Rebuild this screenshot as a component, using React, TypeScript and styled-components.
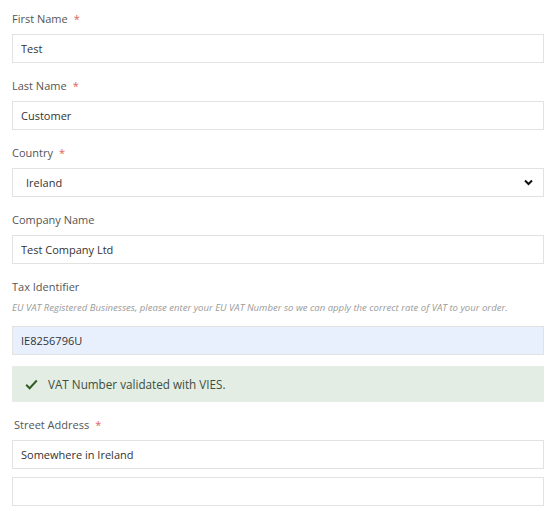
import React from "react";
import styled, { createGlobalStyle } from "styled-components";

const Global = createGlobalStyle`
  html, body { margin: 0; padding: 0; background: #fff; }
  body { font-family: "Open Sans", "Noto Sans", sans-serif; color: #333; }
  * { box-sizing: border-box; }
`;

const Form = styled.form`
  width: 555px;
  padding: 10px 11px 0 12px;
  display: flex;
  flex-direction: column;
`;

const Field = styled.div<{ $gap?: number }>`
  display: flex;
  flex-direction: column;
  margin-bottom: ${(p) => (p.$gap ?? 14)}px;
`;

const Label = styled.label<{ $indent?: number }>`
  font-size: 11px;
  line-height: 18px;
  color: #555;
  margin-bottom: 6px;
  padding-left: ${(p) => p.$indent ?? 0}px;
`;

const Req = styled.span`
  color: #e0605a;
  margin-left: 6px;
  font-size: 11px;
`;

const Help = styled.div`
  font-size: 9.55px;
  font-style: italic;
  line-height: 12px;
  color: #9a9a9a;
  margin-bottom: 12px;
  white-space: nowrap;
`;

const Input = styled.input<{ $filled?: boolean }>`
  height: 29px;
  width: 100%;
  border: 1px solid #e2e2e2;
  background: ${(p) => (p.$filled ? "#e8f0fe" : "#fff")};
  padding: 0 8px;
  font-family: inherit;
  font-size: 11px;
  color: #333;
  outline: none;
  display: block;
`;

const Stack = styled.div`
  display: flex;
  flex-direction: column;
  gap: 8px;
`;

const SelectWrap = styled.div`
  position: relative;
`;

const Select = styled.select`
  appearance: none;
  -webkit-appearance: none;
  height: 29px;
  width: 100%;
  border: 1px solid #e2e2e2;
  background: #fff;
  padding: 0 13px;
  font-family: inherit;
  font-size: 11px;
  color: #333;
  outline: none;
  display: block;
`;

const Chevron = styled.svg`
  position: absolute;
  right: 11px;
  top: 11px;
  width: 9px;
  height: 7px;
  pointer-events: none;
`;

const Notice = styled.div`
  height: 36px;
  background: #e3ede4;
  display: flex;
  align-items: center;
  gap: 10px;
  padding-left: 13px;
  font-size: 11.7px;
  color: #3d4f3d;
  margin-bottom: 14px;
`;

const Check = styled.svg`
  width: 13px;
  height: 11px;
`;

export default function App() {
  return (
    <>
      <Global />
      <Form>
        <Field>
          <Label>
            First Name<Req>*</Req>
          </Label>
          <Input defaultValue="Test" />
        </Field>
        <Field>
          <Label>
            Last Name<Req>*</Req>
          </Label>
          <Input defaultValue="Customer" />
        </Field>
        <Field>
          <Label>
            Country<Req>*</Req>
          </Label>
          <SelectWrap>
            <Select defaultValue="IE">
              <option value="IE">Ireland</option>
            </Select>
            <Chevron viewBox="0 0 9 7">
              <path d="M1 1.5 L4.5 5 L8 1.5" fill="none" stroke="#111" strokeWidth="2" />
            </Chevron>
          </SelectWrap>
        </Field>
        <Field>
          <Label>Company Name</Label>
          <Input defaultValue="Test Company Ltd" />
        </Field>
        <Field $gap={11}>
          <Label>Tax Identifier</Label>
          <Help>
            EU VAT Registered Businesses, please enter your EU VAT Number so we can apply the correct rate of VAT to your order.
          </Help>
          <Input $filled defaultValue="IE8256796U" />
        </Field>
        <Notice>
          <Check viewBox="0 0 13 11">
            <path d="M1.2 5.8 L4.6 9.2 L11.8 1.5" fill="none" stroke="#2f5d23" strokeWidth="2" />
          </Check>
          VAT Number validated with VIES.
        </Notice>
        <Field>
          <Label $indent={2}>
            Street Address<Req>*</Req>
          </Label>
          <Stack>
            <Input defaultValue="Somewhere in Ireland" />
            <Input defaultValue="" />
          </Stack>
        </Field>
      </Form>
    </>
  );
}
